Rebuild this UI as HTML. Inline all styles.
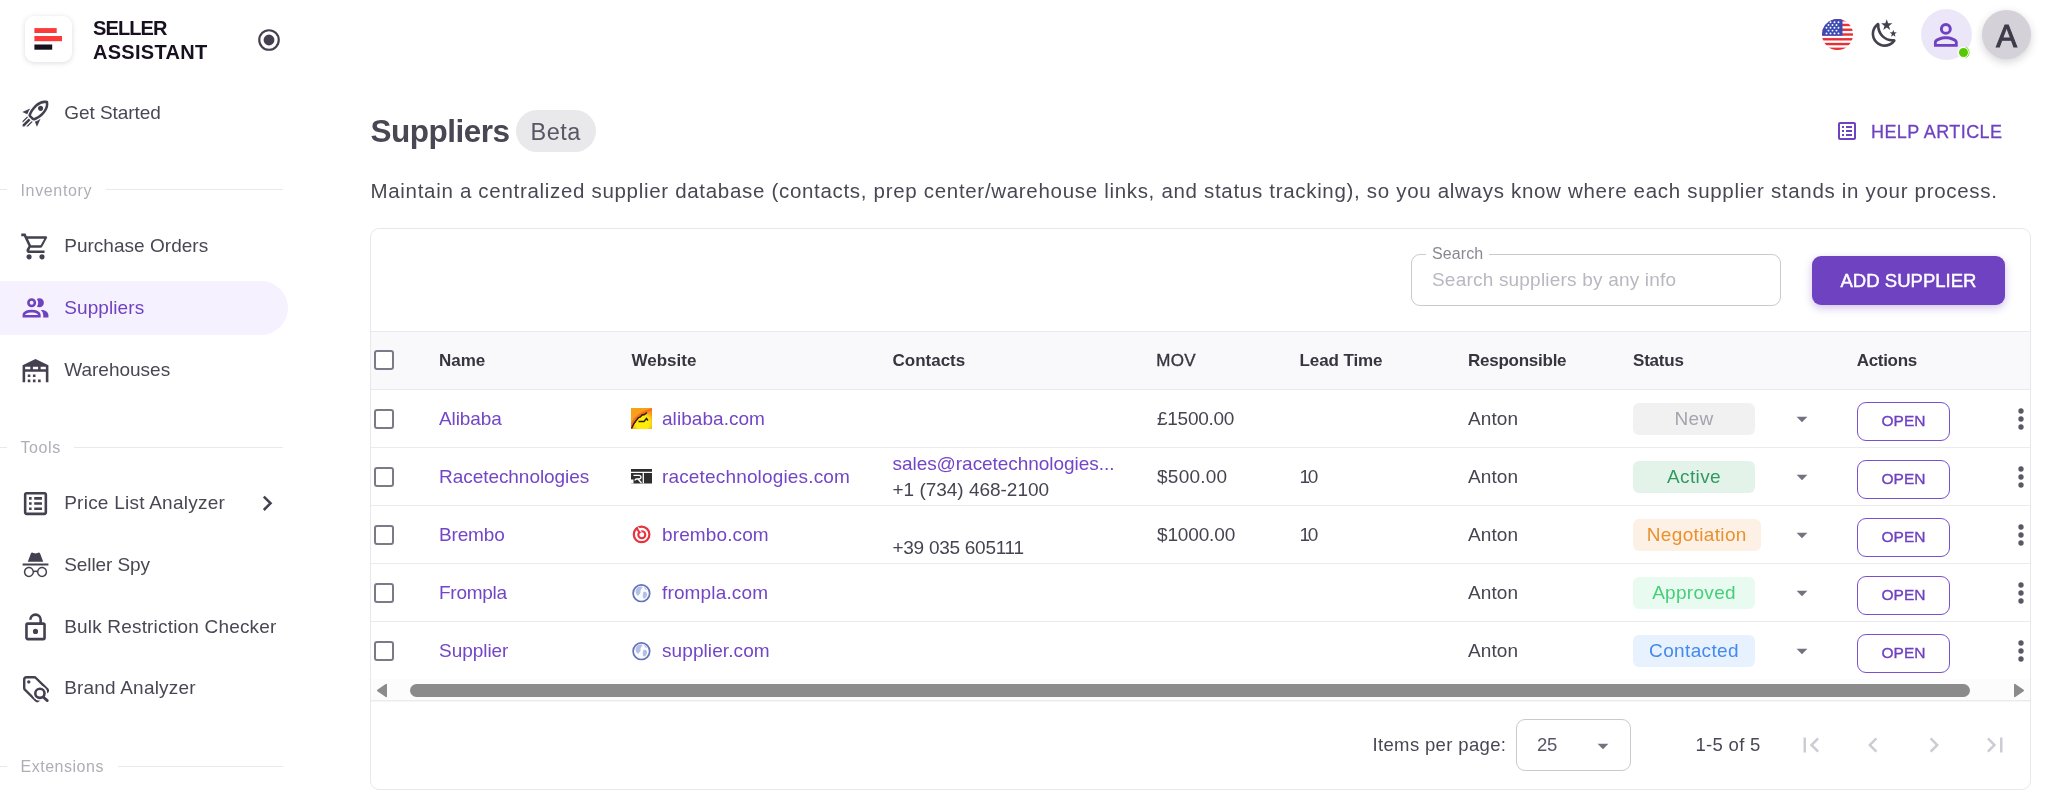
<!DOCTYPE html>
<html lang="en">
<head>
<meta charset="utf-8">
<title>Suppliers - Seller Assistant</title>
<style>
*{box-sizing:border-box;margin:0;padding:0}
html,body{width:2048px;height:799px;overflow:hidden;background:#fff}
body{font-family:"Liberation Sans",sans-serif;color:#444050;position:relative}
svg{display:block}
.abs{position:absolute}
.t{position:absolute;white-space:nowrap;line-height:1}
#nav{position:absolute;left:0;top:0;width:290px;height:799px;background:#fff}
#nav,#topbar,#main{will-change:transform}
.logo{position:absolute;left:25px;top:16px;width:47px;height:46px;border-radius:9px;background:#fff;box-shadow:0 1px 5px rgba(47,43,61,.17)}
.logo i{position:absolute;left:9.5px;height:5px;display:block}
.brand{position:absolute;left:93px;top:16px;font-size:20px;line-height:24px;font-weight:700;color:#16101f}
.item{position:absolute;left:0;width:288px;height:54px}
.item span{position:absolute;left:64.2px;top:16.3px;font-size:19px;line-height:22px;color:#4a4754;white-space:nowrap}
.item.active{background:#f5f1fe;border-radius:0 27px 27px 0}
.item.active span{color:#6f42c1}
.sec{position:absolute;left:0;width:290px;height:20px}
.sec b{position:absolute;top:10px;height:1px;background:#e9e8eb}
.sec span{position:absolute;left:20.5px;top:3px;font-size:16px;line-height:18px;color:#afadb6;white-space:nowrap}
#card{position:absolute;left:370px;top:228px;width:1661px;height:562px;border:1px solid #e8e7ea;border-radius:9px;background:#fff;overflow:hidden}
.hrow{position:absolute;left:0;top:102px;width:1661px;height:59px;background:#f9f9fb;border-top:1px solid #e9e8eb;border-bottom:1px solid #e9e8eb}
.th{position:absolute;top:19px;font-size:17px;line-height:20px;font-weight:700;color:#38353f;white-space:nowrap}
.row{position:absolute;left:0;width:1661px;height:58px;border-bottom:1px solid #ebeaed}
.cb{position:absolute;left:3px;width:20px;height:20px;border:2px solid #7d7a87;border-radius:3px;background:#fff}
.td{position:absolute;font-size:19px;line-height:22px;white-space:nowrap;color:#474451}
.lnk{color:#7345c7}
.chip{position:absolute;left:1262px;top:13px;height:32px;min-width:122px;padding:0 13.800px;border-radius:6px;font-size:19px;line-height:32px;text-align:center;white-space:nowrap}
.open{position:absolute;left:1486px;top:12px;width:93px;height:39px;border:1.3px solid #7a4fd0;border-radius:9px;color:#6f42c1;font-size:15.5px;line-height:36px;text-align:center;-webkit-text-stroke:.35px #6f42c1}
</style>
</head>
<body>

<div id="nav">
<div class="logo"><svg width="47" height="46" viewBox="25 16 47 46"><rect x="34.400" y="28.100" width="22.300" height="4.900" fill="#fb3a3a"/><rect x="34.400" y="36" width="27.600" height="5.200" fill="#fb3a3a"/><rect x="34.400" y="44.500" width="17.800" height="5.200" fill="#16101f"/></svg></div>
<div class="brand"><span id="b1" style="letter-spacing:-.9px">SELLER</span><br><span id="b2" style="letter-spacing:.28px">ASSISTANT</span></div>
<svg class="abs" style="left:256px;top:27px;width:26px;height:26px;fill:#444050" viewBox="0 0 24 24"><path d="M12,20A8,8 0 0,1 4,12A8,8 0 0,1 12,4A8,8 0 0,1 20,12A8,8 0 0,1 12,20M12,2A10,10 0 0,0 2,12A10,10 0 0,0 12,22A10,10 0 0,0 22,12A10,10 0 0,0 12,2M12,7A5,5 0 0,0 7,12A5,5 0 0,0 12,17A5,5 0 0,0 17,12A5,5 0 0,0 12,7Z"/></svg>
<div class="item" style="top:86px"><svg class="abs" style="left:20.3px;top:11.5px;width:31px;height:31px;fill:#444050" viewBox="0 0 24 24"><path d="M13.13 22.19L11.5 18.36C13.07 17.78 14.54 17 15.9 16.09L13.13 22.19M5.64 12.5L1.81 10.87L7.91 8.1C7 9.46 6.22 10.93 5.64 12.5M19.22 4C19.5 4 19.75 4 19.96 4.05C20.13 5.44 19.94 8.3 16.66 11.58C14.96 13.29 12.93 14.6 10.65 15.47L8.5 13.37C9.42 11.06 10.73 9.03 12.42 7.34C15.18 4.58 17.64 4 19.22 4M19.22 2C17.24 2 14.24 2.69 11 5.93C8.81 8.12 7.5 10.53 6.65 12.64C6.37 13.39 6.56 14.21 7.11 14.77L9.24 16.89C9.62 17.27 10.13 17.5 10.66 17.5C10.89 17.5 11.13 17.44 11.36 17.35C13.5 16.53 15.88 15.19 18.07 13C23.73 7.34 21.61 2.39 21.61 2.39S20.7 2 19.22 2M14.54 9.46C13.76 8.68 13.76 7.41 14.54 6.63S16.59 5.85 17.37 6.63C18.14 7.41 18.15 8.68 17.37 9.46C16.59 10.24 15.32 10.24 14.54 9.46M8.88 16.53L7.47 15.12L8.88 16.53M6.24 22L9.88 18.36C9.54 18.27 9.21 18.12 8.91 17.91L4.83 22H6.24M2 22H3.41L8.18 17.24L6.76 15.83L2 20.59V22M2 19.17L6.09 15.09C5.88 14.79 5.73 14.47 5.64 14.12L2 17.76V19.17Z"/></svg><span style="letter-spacing:-0.05px">Get Started</span></div>
<div class="sec" style="top:179px"><b style="left:0;width:7px"></b><span style="letter-spacing:.65px">Inventory</span><b style="left:106px;width:177px"></b></div>
<div class="item" style="top:219px"><svg class="abs" style="left:20.3px;top:11.5px;width:31px;height:31px;fill:#444050" viewBox="0 0 24 24"><path d="M17,18A2,2 0 0,1 19,20A2,2 0 0,1 17,22C15.89,22 15,21.1 15,20C15,18.89 15.89,18 17,18M1,2H4.27L5.21,4H20A1,1 0 0,1 21,5C21,5.17 20.95,5.34 20.88,5.5L17.3,11.97C16.96,12.58 16.3,13 15.55,13H8.1L7.2,14.63L7.17,14.75A0.25,0.25 0 0,0 7.42,15H19V17H7C5.89,17 5,16.1 5,15C5,14.65 5.09,14.32 5.24,14.04L6.6,11.59L3,4H1V2M7,18A2,2 0 0,1 9,20A2,2 0 0,1 7,22C5.89,22 5,21.1 5,20C5,18.89 5.89,18 7,18M16,11L18.78,6H6.14L8.5,11H16Z"/></svg><span style="letter-spacing:0.03px">Purchase Orders</span></div>
<div class="item active" style="top:281.2px"><svg class="abs" style="left:20.3px;top:11.5px;width:31px;height:31px;fill:#6f42c1" viewBox="0 0 24 24"><path d="M13.07 10.41A5 5 0 0 0 13.07 4.59A3.39 3.39 0 0 1 15 4A3.5 3.5 0 0 1 15 11A3.39 3.39 0 0 1 13.07 10.41M5.5 7.5A3.5 3.5 0 1 1 9 11A3.5 3.5 0 0 1 5.5 7.5M7.5 7.5A1.5 1.5 0 1 0 9 6A1.5 1.5 0 0 0 7.5 7.5M16 17V19H2V17S2 13 9 13 16 17 16 17M14 17C13.86 16.22 12.67 15 9 15S4.07 16.31 4 17M15.95 13A5.32 5.32 0 0 1 18 17V19H22V17S22 13.37 15.94 13Z"/></svg><span style="letter-spacing:0.1px">Suppliers</span></div>
<div class="item" style="top:343px"><svg class="abs" style="left:20.3px;top:11.5px;width:31px;height:31px;fill:#444050" viewBox="0 0 24 24"><path d="M6 19H8V21H6V19M12 3L2 8V21H4V13H20V21H22V8L12 3M8 11H4V9H8V11M14 11H10V9H14V11M20 11H16V9H20V11M6 15H8V17H6V15M10 15H12V17H10V15M10 19H12V21H10V19M14 19H16V21H14V19Z"/></svg><span style="letter-spacing:0px">Warehouses</span></div>
<div class="sec" style="top:436px"><b style="left:0;width:7px;top:11px"></b><span style="letter-spacing:.6px">Tools</span><b style="left:74px;width:209px;top:11px"></b></div>
<div class="item" style="top:476px"><svg class="abs" style="left:20.3px;top:11.5px;width:31px;height:31px;fill:#444050" viewBox="0 0 24 24"><path d="M11 15H17V17H11V15M9 7H7V9H9V7M11 13H17V11H11V13M11 9H17V7H11V9M9 11H7V13H9V11M21 5V19C21 20.1 20.1 21 19 21H5C3.9 21 3 20.1 3 19V5C3 3.9 3.9 3 5 3H19C20.1 3 21 3.9 21 5M19 5H5V19H19V5M9 15H7V17H9V15Z"/></svg><span style="letter-spacing:0.24px">Price List Analyzer</span><svg class="abs" style="left:251.8px;top:12.35px;width:30.5px;height:30.5px;fill:#444050" viewBox="0 0 24 24"><path d="M8.590,16.580L13.170,12L8.590,7.410L10,6L16,12L10,18L8.590,16.580Z"/></svg></div>
<div class="item" style="top:538px"><svg class="abs" style="left:20.3px;top:11.5px;width:31px;height:31px;fill:#444050" viewBox="0 0 24 24"><path d="M17.060 13C15.200 13 13.640 14.330 13.240 16.100C12.290 15.690 11.420 15.800 10.760 16.090C10.350 14.310 8.790 13 6.940 13C4.770 13 3 14.790 3 17C3 19.210 4.770 21 6.940 21C9 21 10.680 19.380 10.840 17.320C11.180 17.080 12.070 16.630 13.160 17.340C13.340 19.390 15 21 17.060 21C19.230 21 21 19.210 21 17C21 14.790 19.230 13 17.060 13M6.940 19.860C5.380 19.860 4.130 18.580 4.130 17S5.390 14.140 6.940 14.140C8.500 14.140 9.750 15.420 9.750 17S8.500 19.860 6.940 19.860M17.060 19.860C15.500 19.860 14.250 18.580 14.250 17S15.500 14.140 17.060 14.140C18.620 14.140 19.880 15.420 19.880 17S18.610 19.860 17.060 19.860M22 10.500H2V12H22V10.500M15.530 2.630C15.310 2.140 14.750 1.880 14.220 2.050L12 2.790L9.770 2.050L9.720 2.040C9.190 1.890 8.630 2.170 8.430 2.680L6 9H18L15.560 2.680L15.530 2.630Z"/></svg><span style="letter-spacing:-0.09px">Seller Spy</span></div>
<div class="item" style="top:600px"><svg class="abs" style="left:20.3px;top:11.5px;width:31px;height:31px;fill:#444050" viewBox="0 0 24 24"><path d="M18,20V10H6V20H18M18,8A2,2 0 0,1 20,10V20A2,2 0 0,1 18,22H6C4.89,22 4,21.1 4,20V10A2,2 0 0,1 6,8H15V6A3,3 0 0,0 12,3A3,3 0 0,0 9,6H7A5,5 0 0,1 12,1A5,5 0 0,1 17,6V8H18M12,17A2,2 0 0,1 10,15A2,2 0 0,1 12,13A2,2 0 0,1 14,15A2,2 0 0,1 12,17Z"/></svg><span style="letter-spacing:0.18px">Bulk Restriction Checker</span></div>
<div class="item" style="top:661px"><svg class="abs" style="left:18px;top:8px;width:36px;height:36px" viewBox="18 669 36 36" fill="none" stroke="#444050" stroke-linejoin="round"><path d="M26.600 677.300 H34.200 Q35.200 677.300 35.900 678 L47.200 689.200 Q48.600 690.600 47.200 692 L38.600 700.500 Q37.200 701.900 35.800 700.500 L24.900 689.700 Q24.200 689 24.200 688 V679.700 Q24.200 677.300 26.600 677.300 Z" stroke-width="2.400"/><circle cx="39.900" cy="693.300" r="7.500" fill="#fff" stroke="none"/><circle cx="39.900" cy="693.300" r="4.600" stroke-width="2.600"/><path d="M43.500 697.200 L47.300 700.600" stroke-width="2.800" stroke-linecap="round"/><circle cx="28.800" cy="681.900" r="1.700" fill="#444050" stroke="none"/></svg><span style="letter-spacing:0.19px">Brand Analyzer</span></div>
<div class="sec" style="top:755px"><b style="left:0;width:7px;top:11px"></b><span style="letter-spacing:.52px">Extensions</span><b style="left:118px;width:165px;top:11px"></b></div>
</div>
<div id="topbar">
<svg class="abs" style="left:1822px;top:18.500px;width:31px;height:31px" viewBox="0 0 31 31"><defs><clipPath id="fc"><circle cx="15.500" cy="15.500" r="15.500"/></clipPath></defs><g clip-path="url(#fc)"><rect width="31" height="31" fill="#fff"/><g fill="#ea2e36"><rect y="0.00" width="31" height="2.4"/><rect y="4.77" width="31" height="2.4"/><rect y="9.54" width="31" height="2.4"/><rect y="14.31" width="31" height="2.4"/><rect y="19.08" width="31" height="2.4"/><rect y="23.85" width="31" height="2.4"/><rect y="28.62" width="31" height="2.4"/></g><rect width="20.500" height="16.700" fill="#3c4bb4"/><g fill="#fff"><circle cx="4.5" cy="3.2" r=".95"/><circle cx="8.5" cy="3.2" r=".95"/><circle cx="12.5" cy="3.2" r=".95"/><circle cx="16.5" cy="3.2" r=".95"/><circle cx="6.5" cy="6" r=".95"/><circle cx="10.5" cy="6" r=".95"/><circle cx="14.5" cy="6" r=".95"/><circle cx="4.5" cy="8.8" r=".95"/><circle cx="8.5" cy="8.8" r=".95"/><circle cx="12.5" cy="8.8" r=".95"/><circle cx="16.5" cy="8.8" r=".95"/><circle cx="6.5" cy="11.6" r=".95"/><circle cx="10.5" cy="11.6" r=".95"/><circle cx="14.5" cy="11.6" r=".95"/><circle cx="4.5" cy="14.4" r=".95"/><circle cx="8.5" cy="14.4" r=".95"/><circle cx="12.5" cy="14.4" r=".95"/><circle cx="16.5" cy="14.4" r=".95"/></g></g></svg>
<svg class="abs" style="left:1869.4px;top:18.4px;width:31.5px;height:31.5px;fill:#444050" viewBox="0 0 24 24"><path d="M17.750,4.090L15.220,6.030L16.130,9.090L13.500,7.280L10.870,9.090L11.780,6.030L9.250,4.090L12.440,4L13.500,1L14.560,4L17.750,4.090M21.250,11L19.610,12.250L20.200,14.230L18.500,13.060L16.800,14.230L17.390,12.250L15.750,11L17.810,10.950L18.500,9L19.190,10.950L21.250,11M18.970,15.950C19.800,15.870 20.690,17.050 20.160,17.800C19.840,18.250 19.500,18.670 19.080,19.070C15.170,23 8.840,23 4.940,19.070C1.030,15.170 1.030,8.830 4.940,4.930C5.340,4.530 5.760,4.170 6.210,3.850C6.960,3.320 8.140,4.210 8.060,5.040C7.790,7.900 8.750,10.870 10.950,13.060C13.140,15.260 16.100,16.220 18.970,15.950M17.330,17.970C14.500,17.810 11.700,16.640 9.530,14.500C7.360,12.310 6.200,9.500 6.040,6.680C3.230,9.820 3.340,14.640 6.350,17.660C9.370,20.670 14.190,20.780 17.330,17.970Z"/></svg>
<div class="abs" style="left:1921px;top:9px;width:51px;height:51px;border-radius:50%;background:#ece7f8"></div>
<svg class="abs" style="left:1928.2px;top:16.8px;width:35.7px;height:35.7px;fill:#6f42c1" viewBox="0 0 24 24"><path d="M12,4A4,4 0 0,1 16,8A4,4 0 0,1 12,12A4,4 0 0,1 8,8A4,4 0 0,1 12,4M12,6A2,2 0 0,0 10,8A2,2 0 0,0 12,10A2,2 0 0,0 14,8A2,2 0 0,0 12,6M12,13C14.670,13 20,14.330 20,17V20H4V17C4,14.330 9.330,13 12,13M12,14.900C9.030,14.900 5.900,16.360 5.900,17V18.100H18.100V17C18.100,16.360 14.970,14.900 12,14.900Z"/></svg>
<div class="abs" style="left:1958.700px;top:47.800px;width:9px;height:9px;border-radius:50%;background:#56ca00;box-shadow:0 0 0 1.500px #fff"></div>
<svg class="abs" style="left:1955px;top:44px;width:17px;height:17px" viewBox="0 0 17 17"><path d="M10.500 2.800 A6 6 0 0 1 10.500 14" fill="none" stroke="#7fd83a" stroke-width=".9"/></svg>
<div class="abs" style="left:1982px;top:10px;width:49px;height:49px;border-radius:50%;background:#d4d1d9;box-shadow:0 3px 9px rgba(47,43,61,.2)"></div>
<div class="t" id="avA" style="left:1982px;top:21.300px;width:49px;text-align:center;font-size:31px;color:#3f3b49;-webkit-text-stroke:1.100px #3f3b49">A</div>
</div>
<div id="main">
<div class="t" id="h1" style="left:370.500px;top:116px;font-size:31.500px;font-weight:700;color:#4a4754;letter-spacing:-.5px">Suppliers</div>
<div class="abs" style="left:516px;top:110px;width:80px;height:42px;border-radius:21px;background:#e9e8eb"></div>
<div class="t" id="beta" style="left:530.500px;top:120.500px;font-size:23.500px;color:#5a5666;letter-spacing:.5px">Beta</div>
<svg class="abs" style="left:1835px;top:119px;width:24px;height:24px;fill:#6f42c1" viewBox="0 0 24 24"><path d="M11 15H17V17H11V15M9 7H7V9H9V7M11 13H17V11H11V13M11 9H17V7H11V9M9 11H7V13H9V11M21 5V19C21 20.1 20.1 21 19 21H5C3.9 21 3 20.1 3 19V5C3 3.9 3.9 3 5 3H19C20.1 3 21 3.9 21 5M19 5H5V19H19V5M9 15H7V17H9V15Z"/></svg>
<div class="t" id="help" style="left:1871px;top:122.500px;font-size:18px;color:#6f42c1;letter-spacing:.42px;-webkit-text-stroke:.3px #6f42c1">HELP ARTICLE</div>
<div class="t" id="desc" style="left:370.500px;top:180.500px;font-size:20.500px;color:#4a4754;letter-spacing:.69px">Maintain a centralized supplier database (contacts, prep center/warehouse links, and status tracking), so you always know where each supplier stands in your process.</div>
<div id="card">
<div class="abs" style="left:1040px;top:25px;width:370px;height:52px;border:1px solid #cbc9d0;border-radius:9px"></div>
<div class="t" id="slab" style="left:1055px;top:16px;width:63px;height:20px;background:#fff"></div>
<div class="t" id="slabt" style="left:1061px;top:17px;font-size:16px;color:#8a8792;letter-spacing:.1px">Search</div>
<div class="t" id="sph" style="left:1061px;top:41px;font-size:19px;color:#b9b7c0;letter-spacing:.2px">Search suppliers by any info</div>
<div class="abs" id="addbtn" style="left:1441px;top:27px;width:193px;height:49px;border-radius:9px;background:#6f42c1;box-shadow:0 3px 8px rgba(111,66,193,.32)"></div>
<div class="t" id="addt" style="left:1441px;top:43px;width:193px;text-align:center;font-size:18.500px;color:#fff;letter-spacing:.02px;-webkit-text-stroke:.45px #fff">ADD SUPPLIER</div>
<div class="hrow">
<div class="cb" style="top:18px"></div>
<div class="th" style="left:68px;letter-spacing:0px;">Name</div>
<div class="th" style="left:260.5px;letter-spacing:0px;">Website</div>
<div class="th" style="left:521.5px;letter-spacing:0px;">Contacts</div>
<div class="th" style="left:785.3px;letter-spacing:0.3px;font-weight:400;-webkit-text-stroke:.35px #38353f;">MOV</div>
<div class="th" style="left:928.5px;letter-spacing:-0.1px;">Lead Time</div>
<div class="th" style="left:1097px;letter-spacing:-0.25px;">Responsible</div>
<div class="th" style="left:1262px;letter-spacing:-0.2px;">Status</div>
<div class="th" style="left:1485.7px;letter-spacing:-0.3px;">Actions</div>
</div>
<div class="row" style="top:161px">
<div class="cb" style="top:19px"></div>
<div class="td lnk" style="left:68px;top:17.700px;letter-spacing:-0.1px">Alibaba</div>
<svg class="abs" style="left:260px;top:18px;width:21px;height:21px" viewBox="0 0 21 21"><defs><radialGradient id="ag" cx=".55" cy=".68" r=".62"><stop offset="0" stop-color="#fff200"/><stop offset=".55" stop-color="#fde910"/><stop offset="1" stop-color="#f7941d"/></radialGradient></defs><rect width="21" height="21" fill="#f9a01b"/><path d="M0 21 Q4 7 21 1.500 V21 Z" fill="url(#ag)"/><path d="M0 21 L0 15 Q5 4.500 21 0 L21 2.500 Q8 6 1.500 19.500 Z" fill="#f36f21"/><path d="M.5 20.500 Q3 14.500 6 11.500 L7.500 9.500 L9.500 9 L11 7 L13.500 6.500 L16 4.500 M7.500 13.500 L13 13.500 L15.500 10.500 L17 12.500" fill="none" stroke="#2b1a05" stroke-width="1.400"/></svg>
<div class="td lnk" style="left:291px;top:17.700px;letter-spacing:0.05px">alibaba.com</div>
<div class="td" style="left:786px;top:17.700px;letter-spacing:-0.27px">£1500.00</div>
<div class="td" style="left:1097px;top:17.700px;letter-spacing:.1px">Anton</div>
<div class="chip" style="background:#f1f1f2;color:#a5a3ad;letter-spacing:0.3px">New</div>
<svg class="abs" style="left:1417.8px;top:15.8px;width:26px;height:26px;fill:#75727f" viewBox="0 0 24 24"><path d="M7,10L12,15L17,10H7Z"/></svg>
<div class="open">OPEN</div>
<svg class="abs" style="left:1633.6px;top:12.9px;width:32px;height:32px;fill:#5b5865" viewBox="0 0 24 24"><path d="M12,16A2,2 0 0,1 14,18A2,2 0 0,1 12,20A2,2 0 0,1 10,18A2,2 0 0,1 12,16M12,10A2,2 0 0,1 14,12A2,2 0 0,1 12,14A2,2 0 0,1 10,12A2,2 0 0,1 12,10M12,4A2,2 0 0,1 14,6A2,2 0 0,1 12,8A2,2 0 0,1 10,6A2,2 0 0,1 12,4Z"/></svg>
</div>
<div class="row" style="top:219px">
<div class="cb" style="top:19px"></div>
<div class="td lnk" style="left:68px;top:17.700px;letter-spacing:-0.05px">Racetechnologies</div>
<svg class="abs" style="left:260px;top:21.300px;width:21px;height:14.500px" viewBox="0 0 21 14.500"><rect width="21" height="14.500" fill="#2e2e2e"/><path d="M0 3.400 H21" stroke="#fff" stroke-width="1.100" fill="none"/><path d="M2.500 6.300 H8 Q10 6.300 10 8.200 Q10 10 7.500 10 H5.500 Q4 10 4 11.500 M7.200 10.200 L10.500 14" stroke="#fff" stroke-width="1.300" fill="none"/><path d="M12.300 4 V14.500" stroke="#fff" stroke-width="1.300" fill="none"/><rect x="0" y="10.500" width="2.500" height="4" fill="#fff"/></svg>
<div class="td lnk" style="left:291px;top:17.700px;letter-spacing:0.16px">racetechnologies.com</div>
<div class="td lnk" style="left:521.500px;top:4.700px;letter-spacing:-.05px">sales@racetechnologies...</div>
<div class="td" style="left:521.500px;top:31px;letter-spacing:-0.02px">+1 (734) 468-2100</div>
<div class="td" style="left:786px;top:17.700px;letter-spacing:0.25px">$500.00</div>
<div class="td" style="left:928.500px;top:17.700px;letter-spacing:-2.2px">10</div>
<div class="td" style="left:1097px;top:17.700px;letter-spacing:.1px">Anton</div>
<div class="chip" style="background:#e4f3ea;color:#319a60;letter-spacing:0.35px">Active</div>
<svg class="abs" style="left:1417.8px;top:15.8px;width:26px;height:26px;fill:#75727f" viewBox="0 0 24 24"><path d="M7,10L12,15L17,10H7Z"/></svg>
<div class="open">OPEN</div>
<svg class="abs" style="left:1633.6px;top:12.9px;width:32px;height:32px;fill:#5b5865" viewBox="0 0 24 24"><path d="M12,16A2,2 0 0,1 14,18A2,2 0 0,1 12,20A2,2 0 0,1 10,18A2,2 0 0,1 12,16M12,10A2,2 0 0,1 14,12A2,2 0 0,1 12,14A2,2 0 0,1 10,12A2,2 0 0,1 12,10M12,4A2,2 0 0,1 14,6A2,2 0 0,1 12,8A2,2 0 0,1 10,6A2,2 0 0,1 12,4Z"/></svg>
</div>
<div class="row" style="top:277px">
<div class="cb" style="top:19px"></div>
<div class="td lnk" style="left:68px;top:17.700px;letter-spacing:-0.15px">Brembo</div>
<svg class="abs" style="left:259px;top:17px;width:22px;height:22px" viewBox="630 523 22 22" fill="none" stroke="#e8323f"><circle cx="641.600" cy="534.400" r="7.800" stroke-width="2.200"/><circle cx="641.800" cy="534.800" r="3.500" stroke-width="2.100"/><path d="M636.300 527.800 L640 533.200" stroke-width="2"/><path d="M638.300 527.300 L641.300 532" stroke="#fff" stroke-width="1.100"/></svg>
<div class="td lnk" style="left:291px;top:17.700px;letter-spacing:0.12px">brembo.com</div>
<div class="td" style="left:521.500px;top:31px;letter-spacing:-0.27px">+39 035 605111</div>
<div class="td" style="left:786px;top:17.700px;letter-spacing:-0.15px">$1000.00</div>
<div class="td" style="left:928.500px;top:17.700px;letter-spacing:-2.2px">10</div>
<div class="td" style="left:1097px;top:17.700px;letter-spacing:.1px">Anton</div>
<div class="chip" style="background:#fdf1e6;color:#e8912d;letter-spacing:0.35px">Negotiation</div>
<svg class="abs" style="left:1417.8px;top:15.8px;width:26px;height:26px;fill:#75727f" viewBox="0 0 24 24"><path d="M7,10L12,15L17,10H7Z"/></svg>
<div class="open">OPEN</div>
<svg class="abs" style="left:1633.6px;top:12.9px;width:32px;height:32px;fill:#5b5865" viewBox="0 0 24 24"><path d="M12,16A2,2 0 0,1 14,18A2,2 0 0,1 12,20A2,2 0 0,1 10,18A2,2 0 0,1 12,16M12,10A2,2 0 0,1 14,12A2,2 0 0,1 12,14A2,2 0 0,1 10,12A2,2 0 0,1 12,10M12,4A2,2 0 0,1 14,6A2,2 0 0,1 12,8A2,2 0 0,1 10,6A2,2 0 0,1 12,4Z"/></svg>
</div>
<div class="row" style="top:335px">
<div class="cb" style="top:19px"></div>
<div class="td lnk" style="left:68px;top:17.700px;letter-spacing:-0.26px">Frompla</div>
<svg class="abs" style="left:260px;top:18px;width:22px;height:22px" viewBox="0 0 22 22"><circle cx="10.400" cy="11.200" r="8.300" fill="#fbfcff" stroke="#6372bd" stroke-width="1.700"/><path d="M5 7.500 C6.500 4.500 9.500 4 11.500 5 C11 7 9 7.500 9.500 9.500 C10 11.500 8 12 7 14 C5 12.500 4 10 5 7.500Z M12.500 10 C14.500 9 16.500 10.500 16 13 C15.500 15.500 14 17 12.500 16.500 C11.500 15 11.500 12 12.500 10Z M13 5 C14.500 5.500 15.500 6.500 16 8 C14.500 8 13.500 7 13 5Z" fill="#b3c0e6"/></svg>
<div class="td lnk" style="left:291px;top:17.700px;letter-spacing:0.15px">frompla.com</div>
<div class="td" style="left:1097px;top:17.700px;letter-spacing:.1px">Anton</div>
<div class="chip" style="background:#e9faf0;color:#45cf7a;letter-spacing:0.3px">Approved</div>
<svg class="abs" style="left:1417.8px;top:15.8px;width:26px;height:26px;fill:#75727f" viewBox="0 0 24 24"><path d="M7,10L12,15L17,10H7Z"/></svg>
<div class="open">OPEN</div>
<svg class="abs" style="left:1633.6px;top:12.9px;width:32px;height:32px;fill:#5b5865" viewBox="0 0 24 24"><path d="M12,16A2,2 0 0,1 14,18A2,2 0 0,1 12,20A2,2 0 0,1 10,18A2,2 0 0,1 12,16M12,10A2,2 0 0,1 14,12A2,2 0 0,1 12,14A2,2 0 0,1 10,12A2,2 0 0,1 12,10M12,4A2,2 0 0,1 14,6A2,2 0 0,1 12,8A2,2 0 0,1 10,6A2,2 0 0,1 12,4Z"/></svg>
</div>
<div class="row" style="top:393px;border-bottom:0">
<div class="cb" style="top:19px"></div>
<div class="td lnk" style="left:68px;top:17.700px;letter-spacing:-0.04px">Supplier</div>
<svg class="abs" style="left:260px;top:18px;width:22px;height:22px" viewBox="0 0 22 22"><circle cx="10.400" cy="11.200" r="8.300" fill="#fbfcff" stroke="#6372bd" stroke-width="1.700"/><path d="M5 7.500 C6.500 4.500 9.500 4 11.500 5 C11 7 9 7.500 9.500 9.500 C10 11.500 8 12 7 14 C5 12.500 4 10 5 7.500Z M12.500 10 C14.500 9 16.500 10.500 16 13 C15.500 15.500 14 17 12.500 16.500 C11.500 15 11.500 12 12.500 10Z M13 5 C14.500 5.500 15.500 6.500 16 8 C14.500 8 13.500 7 13 5Z" fill="#b3c0e6"/></svg>
<div class="td lnk" style="left:291px;top:17.700px;letter-spacing:0.09px">supplier.com</div>
<div class="td" style="left:1097px;top:17.700px;letter-spacing:.1px">Anton</div>
<div class="chip" style="background:#e8f1fe;color:#4489ee;letter-spacing:0.35px">Contacted</div>
<svg class="abs" style="left:1417.8px;top:15.8px;width:26px;height:26px;fill:#75727f" viewBox="0 0 24 24"><path d="M7,10L12,15L17,10H7Z"/></svg>
<div class="open">OPEN</div>
<svg class="abs" style="left:1633.6px;top:12.9px;width:32px;height:32px;fill:#5b5865" viewBox="0 0 24 24"><path d="M12,16A2,2 0 0,1 14,18A2,2 0 0,1 12,20A2,2 0 0,1 10,18A2,2 0 0,1 12,16M12,10A2,2 0 0,1 14,12A2,2 0 0,1 12,14A2,2 0 0,1 10,12A2,2 0 0,1 12,10M12,4A2,2 0 0,1 14,6A2,2 0 0,1 12,8A2,2 0 0,1 10,6A2,2 0 0,1 12,4Z"/></svg>
</div>
<div class="abs" style="left:0;top:450px;width:1661px;height:22px;background:#fcfcfc;border-bottom:1px solid #ebebee;box-shadow:0 1px 0 #f6f6f8"></div>
<svg class="abs" style="left:5px;top:453.500px;width:12px;height:15px;fill:#8b8b8b;stroke:#8b8b8b;stroke-width:1.600;stroke-linejoin:round" viewBox="0 0 12 15"><path d="M10.200 1.600 V13.400 L1.800 7.500Z"/></svg>
<svg class="abs" style="left:1642px;top:453.500px;width:12px;height:15px;fill:#8b8b8b;stroke:#8b8b8b;stroke-width:1.600;stroke-linejoin:round" viewBox="0 0 12 15"><path d="M1.800 1.600 V13.400 L10.200 7.500Z"/></svg>
<div class="abs" style="left:39px;top:454.500px;width:1560px;height:13px;border-radius:7px;background:#8b8b8b"></div>
<div class="t" id="ipp" style="left:1001.500px;top:507px;font-size:18.500px;color:#4a4754;letter-spacing:.35px">Items per page:</div>
<div class="abs" style="left:1144.500px;top:490px;width:115px;height:52px;border:1px solid #cbc9d0;border-radius:9px"></div>
<div class="t" style="left:1166px;top:507px;font-size:18.500px;color:#5a5666;letter-spacing:-.3px">25</div>
<svg class="abs" style="left:1218.7px;top:503.7px;width:26px;height:26px;fill:#75727f" viewBox="0 0 24 24"><path d="M7,10L12,15L17,10H7Z"/></svg>
<div class="t" id="cnt" style="left:1324.500px;top:507px;font-size:18.500px;color:#4a4754;letter-spacing:.3px">1-5 of 5</div>
<svg class="abs" style="left:1425px;top:501.29999999999995px;width:30px;height:30px;fill:#cdcbd3" viewBox="0 0 24 24"><path d="M18.410,16.590L13.820,12L18.410,7.410L17,6L11,12L17,18L18.410,16.590M6,6H8V18H6V6Z"/></svg>
<svg class="abs" style="left:1486.7px;top:501.29999999999995px;width:30px;height:30px;fill:#cdcbd3" viewBox="0 0 24 24"><path d="M15.410,16.580L10.830,12L15.410,7.410L14,6L8,12L14,18L15.410,16.580Z"/></svg>
<svg class="abs" style="left:1547.7px;top:501.29999999999995px;width:30px;height:30px;fill:#cdcbd3" viewBox="0 0 24 24"><path d="M8.590,16.580L13.170,12L8.590,7.410L10,6L16,12L10,18L8.590,16.580Z"/></svg>
<svg class="abs" style="left:1609px;top:501.29999999999995px;width:30px;height:30px;fill:#cdcbd3" viewBox="0 0 24 24"><path d="M5.590,7.410L10.180,12L5.590,16.590L7,18L13,12L7,6L5.590,7.410M16,6H18V18H16V6Z"/></svg>
</div>
</div>

</body>
</html>
